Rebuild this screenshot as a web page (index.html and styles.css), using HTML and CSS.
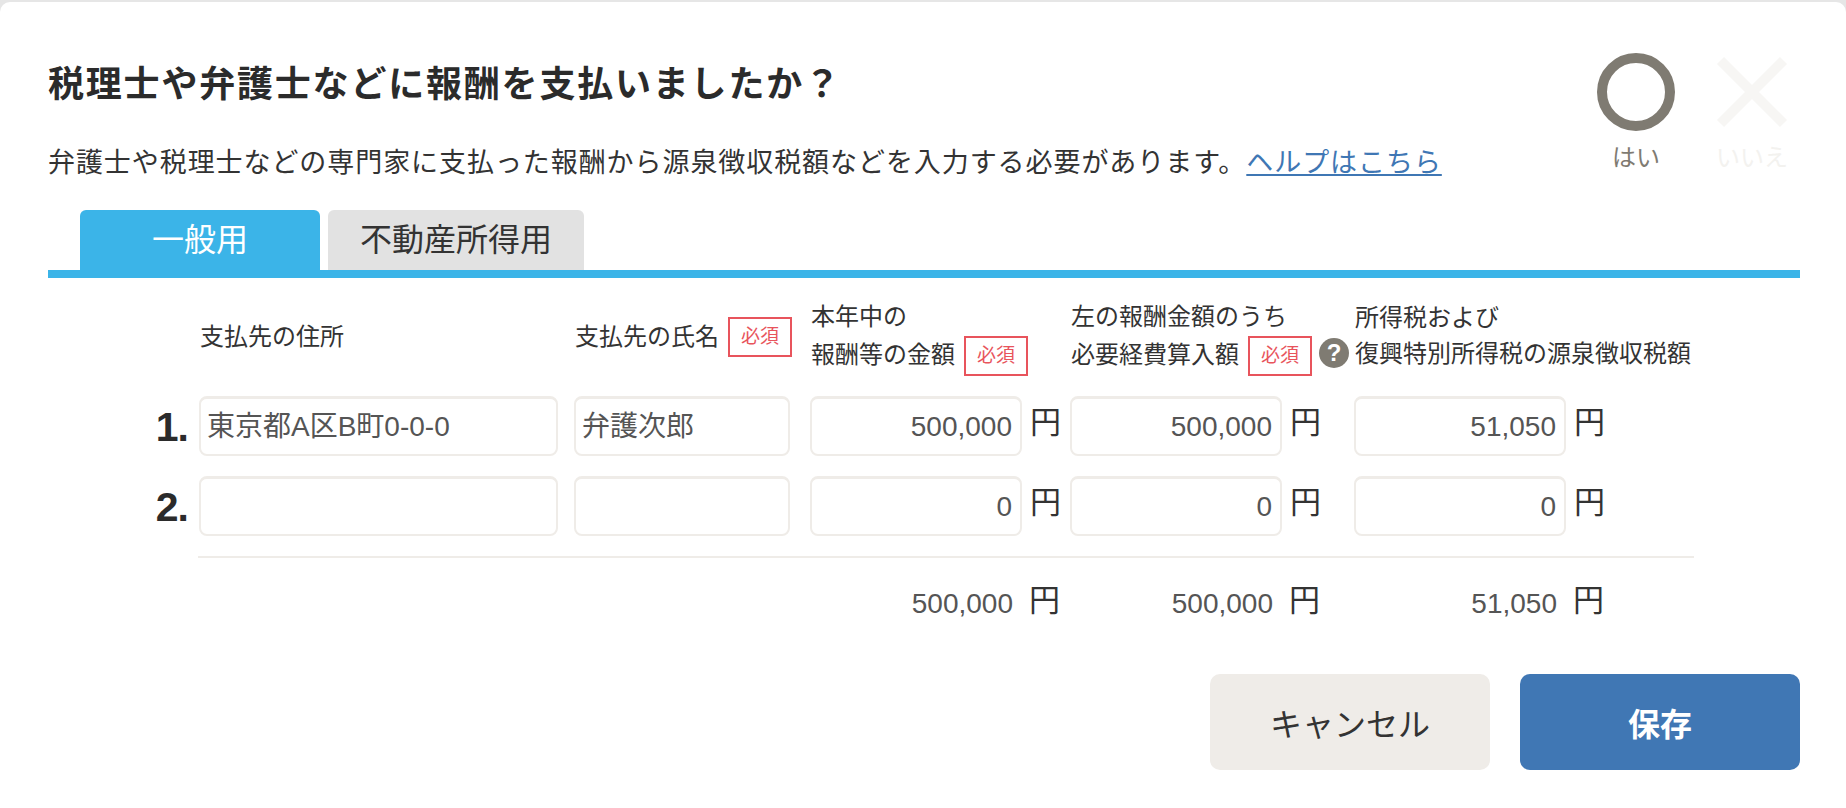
FILE: index.html
```html
<!DOCTYPE html>
<html lang="ja">
<head>
    <meta charset="UTF-8">
    <title>報酬の支払い</title>
    <link rel="stylesheet" href="styles.css">
</head>
<body>
    <div class="dialog">
        <div class="question">
            <div class="question-text">
                <h1>税理士や弁護士などに報酬を支払いましたか？</h1>
                <p class="lead">弁護士や税理士などの専門家に支払った報酬から源泉徴収税額などを入力する必要があります。<a href="#">ヘルプはこちら</a></p>
            </div>
            <div class="answers">
                <div class="answer">
                    <svg class="answer-icon" viewBox="0 0 78 78"><circle cx="39" cy="39" r="34" fill="none" stroke="#7f7b72" stroke-width="10"/></svg>
                    <span>はい</span>
                </div>
                <div class="answer answer-off">
                    <svg class="answer-icon" viewBox="0 0 78 78"><path d="M7.5 7.5 L70.5 70.5 M70.5 7.5 L7.5 70.5" fill="none" stroke="#f7f6f4" stroke-width="10"/></svg>
                    <span>いいえ</span>
                </div>
            </div>
        </div>

        <div class="tabs">
            <div class="tab tab-active">一般用</div>
            <div class="tab">不動産所得用</div>
        </div>

        <div class="table">
            <div class="row head-row">
                <div class="no"></div>
                <div class="cell col-addr head head-single">支払先の住所</div>
                <div class="cell col-name head head-single">支払先の氏名<span class="required">必須</span></div>
                <div class="cell col-amount head">本年中の<br>報酬等の金額<span class="required">必須</span></div>
                <div class="cell col-cost head">左の報酬金額のうち<br>必要経費算入額<span class="required">必須</span><span class="hint">?</span></div>
                <div class="cell col-tax head">所得税および<br>復興特別所得税の源泉徴収税額</div>
            </div>

            <div class="row input-row">
                <div class="no">1.</div>
                <div class="cell col-addr"><div class="input">東京都A区B町0-0-0</div></div>
                <div class="cell col-name"><div class="input">弁護次郎</div></div>
                <div class="cell col-amount"><div class="input num">500,000</div><span class="yen">円</span></div>
                <div class="cell col-cost"><div class="input num">500,000</div><span class="yen">円</span></div>
                <div class="cell col-tax"><div class="input num">51,050</div><span class="yen">円</span></div>
            </div>

            <div class="row input-row">
                <div class="no">2.</div>
                <div class="cell col-addr"><div class="input"></div></div>
                <div class="cell col-name"><div class="input"></div></div>
                <div class="cell col-amount"><div class="input num">0</div><span class="yen">円</span></div>
                <div class="cell col-cost"><div class="input num">0</div><span class="yen">円</span></div>
                <div class="cell col-tax"><div class="input num">0</div><span class="yen">円</span></div>
            </div>

            <div class="total-row">
                <div class="cell col-addr"></div>
                <div class="cell col-name"></div>
                <div class="cell col-amount"><div class="total">500,000</div><span class="yen">円</span></div>
                <div class="cell col-cost"><div class="total">500,000</div><span class="yen">円</span></div>
                <div class="cell col-tax"><div class="total">51,050</div><span class="yen">円</span></div>
            </div>
        </div>

        <div class="actions">
            <button class="btn btn-cancel">キャンセル</button>
            <button class="btn btn-save">保存</button>
        </div>
    </div>
</body>
</html>
```

FILE: styles.css
```css
:root {
    --blue: #3bb4e8;
    --link: #3f77b4;
    --text: #333333;
    --input-text: #555555;
    --line: #efece8;
    --red: #e8545c;
}

html, body {
    margin: 0;
    padding: 0;
    height: 808px;
    overflow: hidden;
    background-color: #e6e6e6;
    font-family: "Liberation Sans", "Noto Sans CJK JP", sans-serif;
    color: var(--text);
}

.dialog {
    height: 806px;
    margin-top: 2px;
    box-sizing: border-box;
    padding: 0 46px 0 48px;
    background-color: #ffffff;
    border-radius: 10px 10px 0 0;
}

.question {
    display: flex;
    justify-content: space-between;
    height: 208px;
}

h1 {
    margin: 0;
    padding-top: 58px;
    font-size: 36px;
    line-height: 50px;
    letter-spacing: 1.8px;
    font-weight: bold;
    color: #2b2b2b;
}

.lead {
    margin: 33px 0 0 0;
    font-size: 27px;
    line-height: 40px;
    letter-spacing: 0.93px;
    white-space: nowrap;
}

.lead a {
    color: var(--link);
    text-decoration: underline;
}

.answers {
    display: flex;
    gap: 38px;
    margin: 51px 9px 0 0;
}

.answer {
    display: flex;
    flex-direction: column;
    align-items: center;
    width: 78px;
    font-size: 24px;
    line-height: 30px;
    white-space: nowrap;
    color: #7f7b72;
}

.answer-off {
    color: #f3f2ef;
}

.answer-icon {
    width: 78px;
    height: 78px;
    margin-bottom: 12px;
}

.tabs {
    display: flex;
    gap: 8px;
    padding-left: 32px;
    border-bottom: 8px solid var(--blue);
}

.tab {
    width: 256px;
    height: 60px;
    line-height: 60px;
    text-align: center;
    font-size: 32px;
    background-color: #e2e2e2;
    border-radius: 6px 6px 0 0;
}

.tab-active {
    width: 240px;
    background-color: var(--blue);
    color: #ffffff;
}

.row, .total-row {
    display: flex;
}

.head-row {
    height: 98px;
    padding-top: 20px;
}

.no {
    width: 151px;
    box-sizing: border-box;
    flex-shrink: 0;
    padding-right: 11px;
    font-size: 41px;
    font-weight: bold;
    line-height: 63px;
    text-align: right;
    letter-spacing: -1px;
    color: #2b2b2b;
}

.cell {
    display: flex;
    align-items: flex-start;
    box-sizing: border-box;
    flex-shrink: 0;
}

.col-addr { width: 375px; }
.col-name { width: 236px; }
.col-amount { width: 260px; }
.col-cost { width: 284px; }
.col-tax { width: 300px; }

.head {
    display: block;
    height: 78px;
    padding-left: 1px;
    font-size: 24px;
    line-height: 38px;
    white-space: nowrap;
}

.head-single {
    display: flex;
    align-items: center;
}

.col-tax.head {
    padding-top: 2px;
    line-height: 36px;
}

.required {
    display: inline-block;
    box-sizing: border-box;
    width: 64px;
    height: 40px;
    margin-left: 9px;
    border: 2px solid var(--red);
    color: var(--red);
    font-size: 19px;
    line-height: 36px;
    text-align: center;
    vertical-align: top;
}

.hint {
    display: inline-block;
    width: 30px;
    height: 30px;
    margin: 2px 0 0 7px;
    border-radius: 50%;
    background-color: #7f7b72;
    color: #ffffff;
    font-size: 24px;
    font-weight: bold;
    line-height: 30px;
    text-align: center;
    vertical-align: top;
}

.input-row {
    height: 80px;
}

.input {
    box-sizing: border-box;
    height: 60px;
    width: 212px;
    padding: 0 8px;
    border: 2px solid var(--line);
    border-top-width: 3px;
    border-radius: 8px;
    color: var(--input-text);
    font-size: 28px;
    line-height: 55px;
    white-space: nowrap;
}

.col-addr .input,
.col-name .input {
    padding-left: 6px;
}

.col-addr .input { width: 359px; }
.col-name .input { width: 216px; }

.num {
    text-align: right;
}

.yen {
    margin-left: 8px;
    font-size: 31px;
    line-height: 54px;
}

.total-row {
    margin-left: 150px;
    width: 1496px;
    border-top: 2px solid var(--line);
    padding-top: 24px;
}

.total-row .col-addr {
    width: 376px;
}

.total {
    width: 203px;
    font-size: 28px;
    line-height: 44px;
    text-align: right;
    color: var(--input-text);
}

.total-row .yen {
    margin-left: 16px;
    line-height: 38px;
}

.actions {
    display: flex;
    justify-content: flex-end;
    gap: 30px;
    margin-top: 48px;
}

.btn {
    width: 280px;
    height: 96px;
    border: none;
    border-radius: 10px;
    font-family: inherit;
    font-size: 32px;
    cursor: pointer;
}

.btn-cancel {
    background-color: #efece8;
    color: var(--text);
}

.btn-save {
    background-color: #4077b4;
    color: #ffffff;
    font-weight: bold;
}
```
